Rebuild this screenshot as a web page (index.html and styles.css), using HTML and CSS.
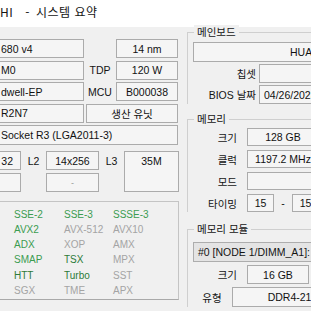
FILE: index.html
```html
<!DOCTYPE html>
<html lang="ko">
<head>
    <meta charset="UTF-8">
    <meta name="viewport" content="width=device-width, initial-scale=1.0">
    <title>시스템 요약</title>
    <link rel="stylesheet" href="styles.css">
</head>
<body>
    <div class="titlebar">
        <span class="title-app">HI</span><span class="title-sep">-</span><span>시스템 요약</span>
    </div>
    <div class="window">
        <div class="cpu-col">
            <div class="cpu-grid">
                <div class="field field-left">680 v4</div>
                <div></div>
                <div class="field">14 nm</div>
                <div class="field field-left">M0</div>
                <div class="label">TDP</div>
                <div class="field">120 W</div>
                <div class="field field-left">dwell-EP</div>
                <div class="label">MCU</div>
                <div class="field">B000038</div>
                <div class="field field-left">R2N7</div>
                <div class="field span-2">생산 유닛</div>
                <div class="field field-left span-3">Socket R3 (LGA2011-3)</div>
            </div>
            <div class="cache-grid">
                <div class="field field-end">32</div>
                <div class="label">L2</div>
                <div class="field">14x256</div>
                <div class="label">L3</div>
                <div class="field field-tall">35M</div>
                <div class="field"></div>
                <div></div>
                <div class="field field-dim">-</div>
                <div></div>
            </div>
            <div class="features">
                <span class="on">SSE-2</span>
                <span class="on">SSE-3</span>
                <span class="on">SSSE-3</span>
                <span class="on">AVX2</span>
                <span class="off">AVX-512</span>
                <span class="off">AVX10</span>
                <span class="on">ADX</span>
                <span class="off">XOP</span>
                <span class="off">AMX</span>
                <span class="on">SMAP</span>
                <span class="on-dark">TSX</span>
                <span class="off">MPX</span>
                <span class="on-dark">HTT</span>
                <span class="on-dark">Turbo</span>
                <span class="off">SST</span>
                <span class="off">SGX</span>
                <span class="off">TME</span>
                <span class="off">APX</span>
            </div>
        </div>

        <div class="side-col">
            <div class="group">
                <div class="group-title">메인보드</div>
                <div class="mb-rows">
                    <div class="field board-name span-2">HUANANZHI X99-F8</div>
                    <div class="label label-end">칩셋</div>
                    <div class="field"></div>
                    <div class="label label-end">BIOS 날짜</div>
                    <div class="field field-left bios-date">04/26/2023</div>
                </div>
            </div>

            <div class="group group-memory">
                <div class="group-title">메모리</div>
                <div class="mem-rows">
                    <div class="label label-end">크기</div>
                    <div class="field">128 GB</div>
                    <div class="label label-end">클럭</div>
                    <div class="field">1197.2 MHz</div>
                    <div class="label label-end">모드</div>
                    <div class="field"></div>
                    <div class="label label-end">타이밍</div>
                    <div class="timings">
                        <div class="field t-box">15</div>
                        <div class="t-dash">-</div>
                        <div class="field t-box">15</div>
                        <div class="t-dash">-</div>
                        <div class="field t-box">15</div>
                    </div>
                </div>
            </div>

            <div class="group group-module">
                <div class="group-title">메모리 모듈</div>
                <div class="dropdown">#0 [NODE 1/DIMM_A1]: Samsung M393A2K40BB1-CRC</div>
                <div class="mod-row">
                    <div class="label label-end mod-label-wide">크기</div>
                    <div class="field mod-size">16 GB</div>
                </div>
                <div class="mod-row mod-row-type">
                    <div class="label label-end mod-label-narrow">유형</div>
                    <div class="field field-left mod-type">DDR4-2133 / PC4-17000</div>
                </div>
            </div>
        </div>
    </div>
</body>
</html>
```

FILE: styles.css
```css
body {
    margin: 0;
    width: 311px;
    height: 311px;
    overflow: hidden;
    background-color: #f0f0f0;
    color: #141414;
    font-family: "Liberation Sans", "Noto Sans CJK KR", sans-serif;
    font-size: 10.5px;
}

.titlebar {
    display: flex;
    height: 27px;
    background-color: #fff;
    font-family: "Noto Sans CJK KR", sans-serif;
    font-size: 12px;
    line-height: 24px;
    letter-spacing: 0.5px;
    white-space: nowrap;
}

.title-sep {
    margin: 0 6px 0 12px;
}

.window {
    display: flex;
    height: 284px;
}

/* left side: cpu */

.cpu-col {
    flex-shrink: 0;
    width: 180px;
    margin-left: -1px;
    padding-top: 12px;
}

.cpu-grid {
    display: grid;
    grid-template-columns: 85px 28px 62px;
    grid-template-rows: 19px 19px 19px 19px 20px;
    gap: 2.5px 2px;
}

.cache-grid {
    display: grid;
    grid-template-columns: 22px 25px 53px 25px 55px;
    grid-template-rows: 19px 19px;
    row-gap: 3px;
    margin-top: 6px;
}

.field {
    display: flex;
    align-items: center;
    justify-content: center;
    box-sizing: border-box;
    border: 1px solid #ababab;
    background-color: #f5f5f5;
    color: #111;
    white-space: nowrap;
    overflow: hidden;
}

.field-left {
    justify-content: flex-start;
    padding-left: 1px;
}

.field-end {
    justify-content: flex-end;
    padding-right: 7px;
}

.field-tall {
    grid-row: span 2;
    align-items: flex-start;
    line-height: 18px;
}

.field-dim {
    color: #9a9a9a;
    font-size: 9px;
}

.span-2 {
    grid-column: span 2;
}

.span-3 {
    grid-column: span 3;
}

.label {
    display: flex;
    align-items: center;
    justify-content: center;
    white-space: nowrap;
}

.label-end {
    justify-content: flex-end;
}

.features {
    display: grid;
    grid-template-columns: 50px 49px 1fr;
    box-sizing: border-box;
    height: 99px;
    margin-top: 9px;
    padding: 6px 0 0 14px;
    border: 1px solid #c4c4c4;
    border-bottom-color: #a9a9a9;
    font-size: 10px;
    line-height: 14.7px;
}

.on {
    color: #3b9c50;
}

.on-dark {
    color: #2d7b38;
}

.off {
    color: #a4a4a4;
}

/* right side: board / memory */

.side-col {
    flex-shrink: 0;
    width: 180px;
    margin-left: 8px;
    padding-top: 5px;
}

.group {
    padding-left: 5px;
    border-top: 1px solid #cfcfcf;
    border-left: 1px solid #cfcfcf;
}

.group-title {
    width: fit-content;
    height: 14px;
    margin: -8px 0 0 1px;
    padding: 0 3px;
    background-color: #f0f0f0;
    line-height: 14px;
}

.mb-rows {
    display: grid;
    grid-template-columns: 63px 140px;
    grid-template-rows: 20px 19px 19px;
    gap: 2px 3px;
    margin-top: 3px;
}

.board-name {
    justify-content: flex-start;
    padding-left: 96px;
}

.bios-date {
    padding-left: 4px;
}

.group-memory {
    margin-top: 15px;
}

.mem-rows {
    display: grid;
    grid-template-columns: 44px 72px;
    grid-auto-rows: 18px;
    gap: 4px 10px;
    margin-top: 2px;
}

.timings {
    display: flex;
}

.t-box {
    flex-shrink: 0;
    width: 27px;
}

.t-dash {
    flex-shrink: 0;
    width: 18px;
    text-align: center;
    line-height: 18px;
}

.group-module {
    margin-top: 17px;
}

.dropdown {
    display: flex;
    align-items: center;
    box-sizing: border-box;
    width: 220px;
    height: 20px;
    margin-top: 6px;
    padding-left: 4px;
    border: 1px solid #adadad;
    background-color: #e4e4e4;
    white-space: nowrap;
}

.mod-row {
    display: flex;
    gap: 10px;
    height: 19px;
    margin-top: 3px;
}

.mod-row-type {
    height: 20px;
}

.mod-label-wide {
    width: 44px;
}

.mod-label-narrow {
    width: 30px;
}

.mod-size {
    width: 62px;
}

.mod-type {
    width: 140px;
    padding-left: 35px;
}
```
